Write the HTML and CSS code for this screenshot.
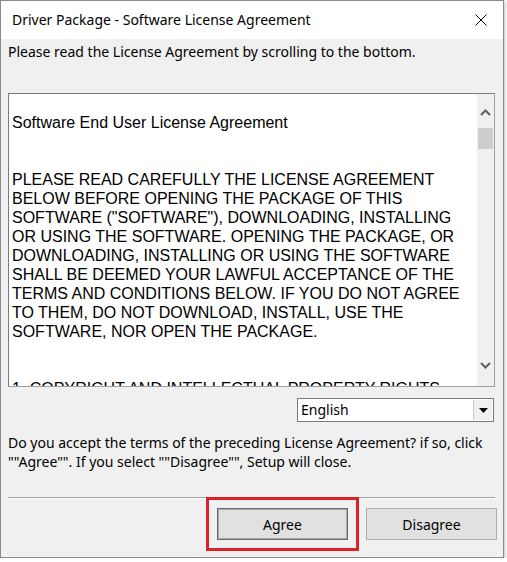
FILE: index.html
```html
<!DOCTYPE html>
<html>
<head>
<meta charset="utf-8">
<link rel="stylesheet" href="styles.css">
</head>
<body>
<div class="window">
  <div class="titlebar">
    <span class="title">Driver Package - Software License Agreement</span>
    <span class="close">
      <svg width="12" height="12" viewBox="0 0 12 12"><path d="M0.5 0.5 L11.5 11.5 M11.5 0.5 L0.5 11.5" stroke="#000" stroke-width="1" fill="none"/></svg>
    </span>
  </div>
  <div class="client">
    <p class="instr">Please read the License Agreement by scrolling to the bottom.</p>
    <div class="license">
      <div class="license-text">Software End User License Agreement


PLEASE READ CAREFULLY THE LICENSE AGREEMENT
BELOW BEFORE OPENING THE PACKAGE OF THIS
SOFTWARE ("SOFTWARE"), DOWNLOADING, INSTALLING
OR USING THE SOFTWARE. OPENING THE PACKAGE, OR
DOWNLOADING, INSTALLING OR USING THE SOFTWARE
SHALL BE DEEMED YOUR LAWFUL ACCEPTANCE OF THE
TERMS AND CONDITIONS BELOW. IF YOU DO NOT AGREE
TO THEM, DO NOT DOWNLOAD, INSTALL, USE THE
SOFTWARE, NOR OPEN THE PACKAGE.


1. COPYRIGHT AND INTELLECTUAL PROPERTY RIGHTS</div>
      <div class="scrollbar">
        <span class="sb-btn sb-up">
          <svg width="11" height="7" viewBox="0 0 11 7"><path d="M1 6 L5.5 1.5 L10 6" stroke="#606060" stroke-width="2" fill="none"/></svg>
        </span>
        <span class="sb-thumb"></span>
        <span class="sb-spacer"></span>
        <span class="sb-btn sb-down">
          <svg width="11" height="7" viewBox="0 0 11 7"><path d="M1 1 L5.5 5.5 L10 1" stroke="#606060" stroke-width="2" fill="none"/></svg>
        </span>
      </div>
    </div>
    <div class="lang-row">
      <div class="select">
        <span class="select-value">English</span>
        <span class="select-btn">
          <svg width="9" height="5" viewBox="0 0 9 5"><path d="M0 0 H9 L4.5 5 Z" fill="#000"/></svg>
        </span>
      </div>
    </div>
    <p class="question">Do you accept the terms of the preceding License Agreement? if so, click ""Agree"". If you select ""Disagree"", Setup will close.</p>
    <div class="separator"></div>
    <div class="buttons">
      <button class="btn btn-default">Agree</button>
      <button class="btn">Disagree</button>
    </div>
  </div>
</div>
</body>
</html>
```

FILE: styles.css
```css
html, body {
  margin: 0;
  padding: 0;
  background: #ffffff;
}
body {
  font-family: "Noto Sans", "Open Sans", sans-serif;
  font-size: 14px;
  color: #000;
}
.window {
  box-sizing: border-box;
  width: 504px;
  height: 558px;
  border: 1px solid #8a8a8a;
  background: #f0f0f0;
  display: flex;
  flex-direction: column;
  box-shadow: 1px 1px 3px rgba(0,0,0,0.25);
}
.titlebar {
  height: 38px;
  background: #ffffff;
  display: flex;
  align-items: center;
  justify-content: space-between;
  padding: 0 16px 0 11px;
  flex: none;
}
.title {
  font-size: 14px;
  line-height: 20px;
}
.close {
  display: flex;
  width: 12px;
  height: 12px;
}
.client {
  flex: 1;
  display: flex;
  flex-direction: column;
  padding: 0 7px 0 7px;
}
.instr {
  margin: 3px 0 0 0;
  line-height: 20px;
  white-space: nowrap;
}
.license {
  margin-top: 31px;
  height: 294px;
  box-sizing: border-box;
  border: 1px solid #a0a0a0;
  border-top-color: #7a7a7a;
  border-left-color: #7a7a7a;
  background: #ffffff;
  display: flex;
  overflow: hidden;
  margin-right: 1px;
}
.license-text {
  flex: 1;
  font-family: "Liberation Sans", Arial, sans-serif;
  font-size: 16px;
  line-height: 19px;
  white-space: pre;
  padding: 19px 0 0 3px;
  overflow: hidden;
}
.scrollbar {
  width: 17px;
  flex: none;
  background: #f0f0f0;
  display: flex;
  flex-direction: column;
  align-items: center;
}
.sb-btn {
  height: 17px;
  width: 17px;
  display: flex;
  align-items: center;
  justify-content: center;
}
.sb-up {
  margin-top: 10px;
}
.sb-down {
  margin-bottom: 12px;
}
.sb-thumb {
  width: 15px;
  height: 21px;
  background: #cdcdcd;
  margin-top: 7px;
}
.sb-spacer {
  flex: 1;
}
.lang-row {
  display: flex;
  justify-content: flex-end;
  margin-top: 11px;
  padding-right: 2px;
}
.select {
  box-sizing: border-box;
  width: 197px;
  height: 24px;
  border: 1px solid #7a7a7a;
  background: #ffffff;
  display: flex;
  align-items: center;
  padding: 1px;
}
.select-value {
  flex: 1;
  padding-left: 2px;
  font-size: 14px;
  line-height: 20px;
}
.select-btn {
  box-sizing: border-box;
  width: 19px;
  height: 20px;
  background: #f0f0f0;
  border-left: 1px solid #c8c8c8;
  display: flex;
  align-items: center;
  justify-content: center;
}
.question {
  margin: 11px 0 0 0;
  line-height: 19px;
  width: 485px;
}
.separator {
  margin-top: 26px;
  height: 1px;
  background: #a0a0a0;
  border-bottom: 1px solid #ffffff;
  margin-right: 1px;
}
.buttons {
  display: flex;
  justify-content: flex-end;
  gap: 18px;
  margin-top: 9px;
  margin-right: -1px;
}
.btn {
  box-sizing: border-box;
  width: 131px;
  height: 32px;
  background: #e1e1e1;
  border: 1px solid #adadad;
  font-family: "Noto Sans", "Open Sans", sans-serif;
  font-size: 14px;
  color: #000;
  padding: 0;
  border-radius: 0;
}
.btn-default {
  border: 1px solid #6a6a6a;
  box-shadow: inset 0 0 0 1px #a8a8a8;
  outline: 3px solid #d9222a;
  outline-offset: 8px;
}
```
